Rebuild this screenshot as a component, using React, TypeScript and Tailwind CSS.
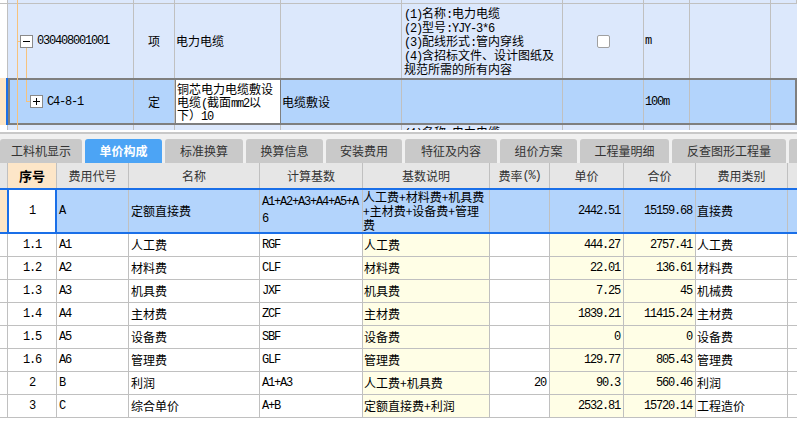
import React from "react";

const mono = "font-['Liberation_Mono',monospace] tracking-[-1.2px]";

function Mixed({ text }: { text: string }) {
  const parts = text.split(/([\x20-\x7e]+)/).filter(Boolean);
  return (
    <>
      {parts.map((p, i) =>
        /^[\x20-\x7e]+$/.test(p) ? (
          <span key={i} className={mono}>
            {p}
          </span>
        ) : (
          <span key={i}>{p}</span>
        ),
      )}
    </>
  );
}

const topGrid = "grid grid-cols-[8px_126px_41px_106px_121px_161px_81px_46px_81px_26px]";
const cell = "border-r border-[#c0c0c0]";

const tabs = [
  { label: "工料机显示", w: "w-[82px]" },
  { label: "单价构成", w: "w-[77px]", active: true },
  { label: "标准换算", w: "w-[78px]" },
  { label: "换算信息", w: "w-[77px]" },
  { label: "安装费用", w: "w-[76px]" },
  { label: "特征及内容", w: "w-[92px]" },
  { label: "组价方案", w: "w-[77px]" },
  { label: "工程量明细", w: "w-[89px]" },
  { label: "反查图形工程量", w: "w-[114px]" },
  { label: "", w: "w-[20px]" },
];

const rows = [
  { no: "1.1", code: "A1", name: "人工费", base: "RGF", desc: "人工费", rate: "", price: "444.27", total: "2757.41", type: "人工费" },
  { no: "1.2", code: "A2", name: "材料费", base: "CLF", desc: "材料费", rate: "", price: "22.01", total: "136.61", type: "材料费" },
  { no: "1.3", code: "A3", name: "机具费", base: "JXF", desc: "机具费", rate: "", price: "7.25", total: "45", type: "机械费" },
  { no: "1.4", code: "A4", name: "主材费", base: "ZCF", desc: "主材费", rate: "", price: "1839.21", total: "11415.24", type: "主材费" },
  { no: "1.5", code: "A5", name: "设备费", base: "SBF", desc: "设备费", rate: "", price: "0", total: "0", type: "设备费" },
  { no: "1.6", code: "A6", name: "管理费", base: "GLF", desc: "管理费", rate: "", price: "129.77", total: "805.43", type: "管理费" },
  { no: "2", code: "B", name: "利润", base: "A1+A3", desc: "人工费+机具费", rate: "20", price: "90.3", total: "560.46", type: "利润" },
  { no: "3", code: "C", name: "综合单价", base: "A+B", desc: "定额直接费+利润", rate: "", price: "2532.81", total: "15720.14", type: "工程造价" },
];

const descLines = [
  "(1)名称:电力电缆",
  "(2)型号:YJY-3*6",
  "(3)配线形式:管内穿线",
  "(4)含招标文件、设计图纸及",
  "规范所需的所有内容",
];

export default function App() {
  return (
    <div className="h-[444px] w-[797px] overflow-hidden bg-white font-['Noto_Sans_CJK_SC',sans-serif] text-[12px] text-black">
      {/* upper list */}
      <div className="relative">
        <div className={`${topGrid} h-[3px] bg-[#dce8fc]`}>
          {Array.from({ length: 10 }).map((_, i) => (
            <div key={i} className={i === 0 ? "border-r border-[#c0c0c0] bg-white" : cell} />
          ))}
        </div>
        <div className={`${topGrid} h-[75px] border-t border-[#c0c0c0] bg-[#dce8fc]`}>
          <div className={`${cell} bg-white`} />
          <div className={`${cell} flex items-center pl-[12px]`}>
            <span className="flex h-[13px] w-[13px] items-center justify-center border border-[#8a8a8a] bg-white">
              <span className="h-px w-[7px] bg-black" />
            </span>
            <span className={`${mono} ml-[4px]`}>030408001001</span>
          </div>
          <div className={`${cell} flex items-center justify-center`}>项</div>
          <div className={`${cell} flex items-center pl-[1px]`}>电力电缆</div>
          <div className={cell} />
          <div className={`${cell} flex flex-col justify-center pl-[2px]`}>
            {descLines.map((l) => (
              <div key={l} className="h-[14px] whitespace-nowrap leading-[14px]">
                <Mixed text={l} />
              </div>
            ))}
          </div>
          <div className={`${cell} flex items-center justify-center`}>
            <span className="h-[13px] w-[13px] rounded-[2px] border border-[#a0a0a0] bg-white" />
          </div>
          <div className={`${cell} flex items-center pl-[1px]`}>
            <span className={mono}>m</span>
          </div>
          <div className={cell} />
          <div />
        </div>
        <div className="flex h-[47px]">
          <div className="relative w-[8px] bg-[#fde6c6]">
            <div className="absolute right-0 top-0 h-full w-[2px] bg-[#1a6fe8]" />
          </div>
          <div className="grid flex-1 grid-cols-[124px_41px_106px_121px_161px_81px_46px_81px_1fr] border-2 border-[#7f7f7f] bg-[#b3d4fc]">
            <div className={`${cell} flex items-center pl-[20px]`}>
              <span className="relative flex h-[13px] w-[13px] items-center justify-center border border-[#8a8a8a] bg-white">
                <span className="h-px w-[7px] bg-black" />
                <span className="absolute h-[7px] w-px bg-black" />
              </span>
              <span className={`${mono} ml-[4px]`}>C4-8-1</span>
            </div>
            <div className={`${cell} flex items-center justify-center`}>定</div>
            <div className="flex flex-col justify-center border-x border-[#7f7f7f] bg-white pl-[1px]">
              <div className="h-[13px] whitespace-nowrap leading-[13px]">铜芯电力电缆敷设</div>
              <div className="h-[13px] whitespace-nowrap leading-[13px]">
                <Mixed text="电缆(截面mm2以" />
              </div>
              <div className="h-[13px] whitespace-nowrap leading-[13px]">
                下）<span className={mono}>10</span>
              </div>
            </div>
            <div className={`${cell} flex items-center pl-[1px]`}>电缆敷设</div>
            <div className={cell} />
            <div className={cell} />
            <div className={`${cell} flex items-center pl-[1px]`}>
              <span className={mono}>100m</span>
            </div>
            <div className={cell} />
            <div />
          </div>
        </div>
        <div className={`${topGrid} h-[5px] overflow-hidden bg-[#dce8fc]`}>
          <div className={`${cell} bg-white`} />
          <div className={cell} />
          <div className={cell} />
          <div className={cell} />
          <div className={cell} />
          <div className={`${cell} h-[14px] overflow-hidden whitespace-nowrap pl-[2px] leading-[14px]`}>
            <Mixed text="(1)名称:电力电缆" />
          </div>
          <div className={cell} />
          <div className={cell} />
          <div className={cell} />
          <div />
        </div>
        {/* tree connectors */}
        <div className="pointer-events-none absolute left-[17px] top-0 h-[130px] w-px bg-[#f7c27c]" />
        <div className="pointer-events-none absolute left-[17px] top-[41px] h-px w-[3px] bg-[#f7c27c]" />
        <div className="pointer-events-none absolute left-[26px] top-[48px] h-[30px] w-px bg-[#f7c27c]" />
        <div className="pointer-events-none absolute left-[26px] top-[80px] h-[21px] w-px bg-[#f7c27c]" />
        <div className="pointer-events-none absolute left-[26px] top-[101px] h-px w-[4px] bg-[#f7c27c]" />
      </div>
      <div className="h-[2px] bg-white" />
      <div className="h-[2px] bg-[#c8c8c8]" />

      {/* tabs */}
      <div className="flex h-[29px] items-end gap-[3px] overflow-hidden bg-[#f0f0f0] pt-[5px]">
        {tabs.map((t, i) => (
          <div
            key={i}
            className={`flex h-[24px] shrink-0 items-center justify-center rounded-t-[3px] text-[12px] ${t.w} ${
              t.active ? "bg-[#4ca4f5] font-bold text-white" : "bg-[#c9c9c9] text-[#333]"
            }`}
          >
            {t.label}
          </div>
        ))}
      </div>

      {/* header */}
      <div className="flex h-[25px] bg-[#e6e6e6] text-[#333]">
        <div className="w-[8px] border-r border-[#c0c0c0]" />
        <div className="flex w-[49px] items-center justify-center border-r border-[#c0c0c0] bg-[#fde6c8] text-[13px] font-bold text-black">序号</div>
        <div className="flex w-[72px] items-center justify-center border-r border-[#c0c0c0]">费用代号</div>
        <div className="flex w-[131px] items-center justify-center border-r border-[#c0c0c0]">名称</div>
        <div className="flex w-[103px] items-center justify-center border-r border-[#c0c0c0]">计算基数</div>
        <div className="flex w-[127px] items-center justify-center border-r border-[#c0c0c0]">基数说明</div>
        <div className="flex w-[60px] items-center justify-center border-r border-[#c0c0c0]">
          <Mixed text="费率(%)" />
        </div>
        <div className="flex w-[74px] items-center justify-center border-r border-[#c0c0c0]">单价</div>
        <div className="flex w-[72px] items-center justify-center border-r border-[#c0c0c0]">合价</div>
        <div className="flex w-[92px] items-center justify-center border-r border-[#c0c0c0]">费用类别</div>
        <div className="flex-1" />
      </div>

      {/* selected row */}
      <div className="flex h-[46px] border-y-2 border-[#1a6fe8] bg-[#b3d4fc]">
        <div className="w-[7px] bg-[#fde6c6]" />
        <div className={`flex w-[50px] items-center justify-center border-x-2 border-[#1a6fe8] bg-white ${mono}`}>1</div>
        <div className={`flex w-[72px] items-center border-r border-[#c0c0c0] pl-[2px] ${mono}`}>A</div>
        <div className="flex w-[131px] items-center border-r border-[#c0c0c0] pl-[2px]">定额直接费</div>
        <div className={`flex w-[103px] flex-col justify-center border-r border-[#c0c0c0] pl-[2px] leading-[17px] ${mono}`}>
          <div>A1+A2+A3+A4+A5+A</div>
          <div>6</div>
        </div>
        <div className="flex w-[127px] flex-col justify-start overflow-hidden whitespace-nowrap border-r border-[#c0c0c0]">
          <div className="h-[14px] leading-[14px]">人工费+材料费+机具费</div>
          <div className="h-[14px] leading-[14px]">+主材费+设备费+管理</div>
          <div className="h-[14px] leading-[14px]">费</div>
        </div>
        <div className="w-[60px] border-r border-[#c0c0c0]" />
        <div className={`flex w-[74px] items-center justify-end border-r border-[#c0c0c0] pr-[3px] ${mono}`}>2442.51</div>
        <div className={`flex w-[72px] items-center justify-end border-r border-[#c0c0c0] pr-[3px] ${mono}`}>15159.68</div>
        <div className="flex w-[92px] items-center border-r border-[#c0c0c0] pl-[1px]">直接费</div>
        <div className="flex-1" />
      </div>

      {/* detail rows */}
      {rows.map((r) => (
        <div key={r.no} className="flex h-[23px] border-b border-[#c0c0c0]">
          <div className="w-[8px] border-r border-[#c0c0c0]" />
          <div className={`flex w-[49px] items-center justify-center border-r border-[#c0c0c0] ${mono}`}>{r.no}</div>
          <div className={`flex w-[72px] items-center border-r border-[#c0c0c0] pl-[2px] ${mono}`}>{r.code}</div>
          <div className="flex w-[131px] items-center border-r border-[#c0c0c0] pl-[2px]">{r.name}</div>
          <div className={`flex w-[103px] items-center border-r border-[#c0c0c0] pl-[2px] ${mono}`}>{r.base}</div>
          <div className="flex w-[127px] items-center border-r border-[#c0c0c0] bg-[#fffee6] pl-[1px]">{r.desc}</div>
          <div className={`flex w-[60px] items-center justify-end border-r border-[#c0c0c0] pr-[3px] ${mono}`}>{r.rate}</div>
          <div className={`flex w-[74px] items-center justify-end border-r border-[#c0c0c0] bg-[#fffee6] pr-[3px] ${mono}`}>{r.price}</div>
          <div className={`flex w-[72px] items-center justify-end border-r border-[#c0c0c0] bg-[#fffee6] pr-[3px] ${mono}`}>{r.total}</div>
          <div className="flex w-[92px] items-center border-r border-[#c0c0c0] pl-[1px]">{r.type}</div>
          <div className="flex-1" />
        </div>
      ))}
    </div>
  );
}
